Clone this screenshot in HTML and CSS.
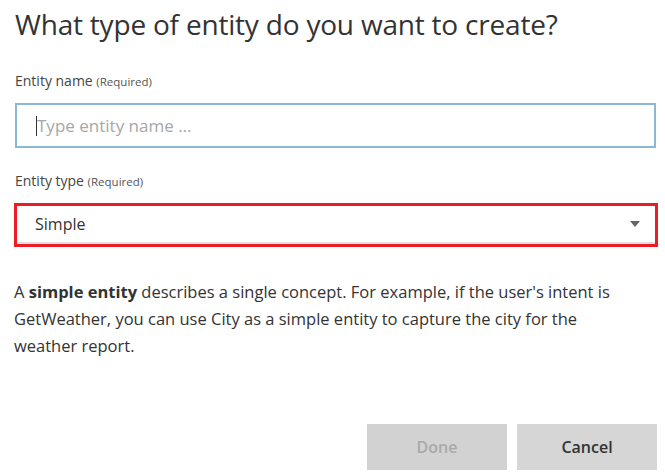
FILE: index.html
```html
<!DOCTYPE html>
<html>
<head>
<meta charset="utf-8">
<link rel="stylesheet" href="styles.css">
</head>
<body>
<div class="dialog">
  <h1 class="title">What type of entity do you want to create?</h1>
  <div class="field">
    <div class="label">Entity name <span class="req">(Required)</span></div>
    <div class="input"><span class="caret"></span><span class="placeholder">Type entity name ...</span></div>
  </div>
  <div class="field field-type">
    <div class="label">Entity type <span class="req">(Required)</span></div>
    <div class="select-wrap">
      <div class="select"><span>Simple</span><span class="arrow"></span></div>
    </div>
  </div>
  <p class="desc">A <b>simple entity</b> describes a single concept. For example, if the user's intent is GetWeather, you can use City as a simple entity to capture the city for the weather report.</p>
  <div class="actions">
    <button class="btn btn-done">Done</button>
    <button class="btn btn-cancel">Cancel</button>
  </div>
</div>
</body>
</html>
```
FILE: styles.css
```css
html, body {
  margin: 0;
  padding: 0;
  background: #fff;
}
body {
  font-family: "Open Sans", "Noto Sans", sans-serif;
  color: #333;
}
.dialog {
  padding: 0 8px 0 14px;
  height: 475px;
  box-sizing: border-box;
  display: flex;
  flex-direction: column;
}
.title {
  margin: 4px 0 0 1px;
  font-weight: 400;
  font-size: 28px;
  line-height: 40px;
  color: #333;
  letter-spacing: -0.2px;
}
.field {
  margin-top: 28px;
}
.field-type {
  margin-top: 24px;
}
.label {
  font-size: 14px;
  line-height: 18px;
  color: #444;
  padding-left: 1px;
}
.req {
  font-size: 11.5px;
  color: #555;
}
.input {
  margin-top: 12px;
  margin-left: 1px;
  width: 641px;
  height: 45px;
  box-sizing: border-box;
  border: 2px solid #8cb8d6;
  display: flex;
  align-items: center;
  padding-left: 19px;
}
.caret {
  width: 1px;
  height: 20px;
  background: #333;
}
.placeholder {
  font-size: 17px;
  color: #a6a6a6;
}
.select-wrap {
  margin-top: 12px;
  width: 644px;
  height: 44px;
  box-sizing: border-box;
  border: 3px solid #ea1c24;
}
.select {
  height: 100%;
  box-sizing: border-box;
  border-bottom: 2px solid #dedede;
  display: flex;
  align-items: center;
  justify-content: space-between;
  padding: 0 15px 0 18px;
  font-size: 16px;
  color: #333;
}
.arrow {
  width: 0;
  height: 0;
  border-left: 5px solid transparent;
  border-right: 5px solid transparent;
  border-top: 6px solid #666;
}
.desc {
  margin: 31px 0 0 0;
  font-size: 16.5px;
  line-height: 27px;
  color: #333;
  padding-right: 30px;
}
.desc b {
  font-weight: 700;
}
.actions {
  margin-top: auto;
  margin-bottom: 5px;
  display: flex;
  justify-content: flex-end;
  gap: 10px;
}
.btn {
  width: 140px;
  height: 46px;
  border: none;
  font-family: "Open Sans", "Noto Sans", sans-serif;
  font-size: 16px;
  font-weight: 600;
}
.btn-done {
  background: #d2d2d2;
  color: #a9a9a9;
}
.btn-cancel {
  background: #d6d6d6;
  color: #333;
}
```
